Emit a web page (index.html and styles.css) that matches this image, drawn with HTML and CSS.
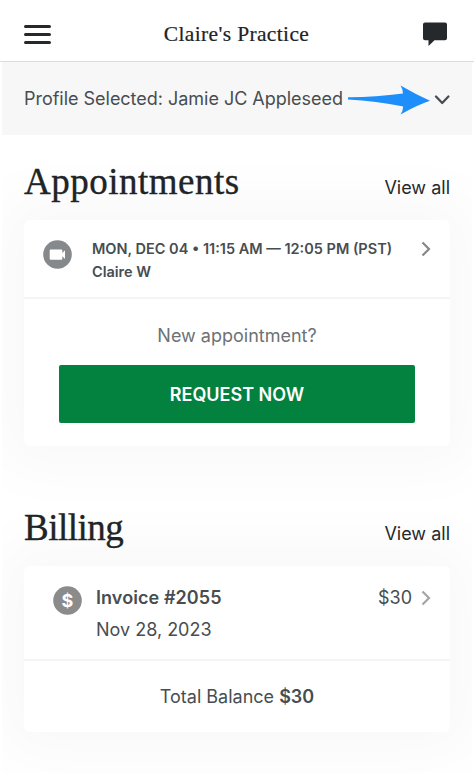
FILE: index.html
```html
<!DOCTYPE html>
<html lang="en">
<head>
<meta charset="utf-8">
<title>Claire's Practice</title>
<link rel="stylesheet" href="styles.css">
</head>
<body>
<header class="topbar">
  <svg class="menu" width="27" height="21" viewBox="0 0 27 21"><path d="M1.5 2.5h24M1.5 10.5h24M1.5 18.5h24"/></svg>
  <span class="brand">Claire's Practice</span>
  <svg class="chat" width="26" height="25" viewBox="0 0 26 25"><path d="M3 .5h20a2 2 0 0 1 2 2v13.800a2 2 0 0 1-2 2H12.500L6.500 24v-5.700H3a2 2 0 0 1-2-2V2.500a2 2 0 0 1 2-2z"/></svg>
</header>
<div class="profile">
  <span class="profile-name">Profile Selected: Jamie JC Appleseed</span>
  <svg class="arrow" width="84" height="30" viewBox="0 0 84 30"><path d="M1 12.200Q28 12.300 56 8.500Q56 4 53.500 .500Q68 9 83 15.700Q69 20.500 53.500 29.500Q56 26 56.200 21.500Q29 16 1 14.600z"/></svg>
  <svg class="down" width="16" height="10" viewBox="0 0 16 10"><path d="M2 1.500l6.200 6.500 6.200-6.500"/></svg>
</div>
<main>
  <section class="appointments">
    <div class="heading"><h1>Appointments</h1><a>View all</a></div>
    <div class="card">
      <div class="visit">
        <svg width="29" height="29" viewBox="0 0 29 29"><circle class="disc" cx="14.500" cy="14.500" r="14.300"/><path class="glyph" d="M7.700 9.500h10.600a1 1 0 0 1 1 1v2.400l2.700-2.700v8.700l-2.700-2.700v2.500a1 1 0 0 1-1 1H7.700a1 1 0 0 1-1-1v-8.200a1 1 0 0 1 1-1z"/></svg>
        <div class="visit-text"><div class="when">MON, DEC 04 • 11:15 AM — 12:05 PM (PST)</div><div class="who">Claire W</div></div>
        <svg class="next" width="10" height="16" viewBox="0 0 10 16"><path d="M1.500 1.500L8 8l-6.500 6.500"/></svg>
      </div>
      <div class="request">
        <p>New appointment?</p>
        <button>REQUEST NOW</button>
      </div>
    </div>
  </section>
  <section class="billing">
    <div class="heading"><h1>Billing</h1><a>View all</a></div>
    <div class="card">
      <div class="invoice">
        <svg width="29" height="29" viewBox="0 0 29 29"><circle class="disc neutral" cx="14.500" cy="14.500" r="14.300"/><text class="dollar" x="14.500" y="21" text-anchor="middle">$</text></svg>
        <div class="invoice-text"><div class="number">Invoice #2055</div><div class="date">Nov 28, 2023</div></div>
        <span class="amount">$30</span>
        <svg class="next pale" width="10" height="16" viewBox="0 0 10 16"><path d="M1.500 1.500L8 8l-6.500 6.500"/></svg>
      </div>
      <div class="balance"><span class="balance-text">Total Balance <b>$30</b></span></div>
    </div>
  </section>
</main>
</body>
</html>
```
FILE: styles.css
```css
* { box-sizing: border-box; }
body {
  margin: 0;
  min-height: 773px;
  background: #fff;
  color: #474d50;
  font: 18px/24px Inter, "Liberation Sans", sans-serif;
}
svg { display: block; flex: none; }
span, a, .when, .who, .number, .date { white-space: nowrap; }
.topbar {
  height: 62px;
  padding: 7px 26px 0 24px;
  display: grid;
  grid-template-columns: 27px 1fr 26px;
  align-items: center;
  border-bottom: 1px solid #dcddde;
}
.menu path { fill: none; stroke: #25292b; stroke-width: 3; stroke-linecap: round; }
.chat path { fill: #25292b; }
.brand {
  text-align: center;
  font: 21.500px/28px "Liberation Serif", serif;
  letter-spacing: .35px;
  color: #202426;
  -webkit-text-stroke: .2px #202426;
}
.profile {
  position: relative;
  z-index: 1;
  height: 73px;
  margin: 0 2px;
  padding: 0 21px 0 22px;
  display: flex;
  align-items: center;
  background: #f7f7f7;
}
.profile-name { width: 323px; letter-spacing: -.02px; }
.arrow path { fill: #1e8efa; }
.arrow { margin-top: 3px; }
.down { margin: 3px 0 0 3px; }
.down path { fill: none; stroke: #474d50; stroke-width: 2.300; stroke-linecap: round; stroke-linejoin: round; }
main { width: 470px; height: 638px; margin: 0 2px; padding: 0 22px; overflow: hidden; }
.heading {
  height: 85px;
  display: flex;
  justify-content: space-between;
  align-items: baseline;
}
.billing .heading { margin-top: 35px; }
h1 {
  margin: 0;
  padding-top: 25px;
  font: 37px/44px "Liberation Serif", serif;
  letter-spacing: .5px;
  color: #202426;
  -webkit-text-stroke: .35px #202426;
}
.billing h1 { letter-spacing: -.5px; }
.heading a { color: #25292b; }
.card {
  width: 426px;
  background: #fff;
  border-radius: 6px;
  box-shadow: 0 0 60px 24px rgba(40, 44, 48, .026);
}
.section, .billing { position: relative; }
.appointments .card { height: 226px; }
.visit {
  height: 79px;
  padding: 20px 19px 0;
  display: flex;
  align-items: flex-start;
  border-bottom: 2px solid #f4f4f4;
}
.visit-text { margin-left: 20px; flex: 1; font-size: 14.500px; line-height: 22.500px; font-weight: 600; margin-top: -2px; }
.disc { fill: #85898b; }
.disc.neutral { fill: #8b8b8b; }
.glyph { fill: #fff; }
.next path { fill: none; stroke: #858789; stroke-width: 2.200; }
.next.pale path { stroke: #a3a5a7; }
.visit .next { margin-top: 1px; }
.request { padding: 25px 35px; text-align: center; }
.request p { margin: 0 0 17px; color: #6d7275; }
button {
  display: block;
  width: 356px;
  height: 58px;
  padding: 2px 0 0;
  border: 0;
  border-radius: 2px;
  background: #03813f;
  color: #fff;
  font: 600 18px/24px Inter, sans-serif;
}
.invoice {
  height: 95px;
  padding: 20px 19px 0 29px;
  display: flex;
  align-items: flex-start;
  border-bottom: 2px solid #f4f4f4;
}
.invoice-text { margin-left: 14px; flex: 1; line-height: 32px; margin-top: -4px; }
.number { font-weight: 600; letter-spacing: .08px; }
.amount { margin-right: 9px; }
.invoice .next { margin-top: 4px; }
.dollar { fill: #fff; font: 700 18px Inter, sans-serif; }
.balance { height: 71px; display: flex; align-items: center; justify-content: center; }
b { font-weight: 600; }
```
